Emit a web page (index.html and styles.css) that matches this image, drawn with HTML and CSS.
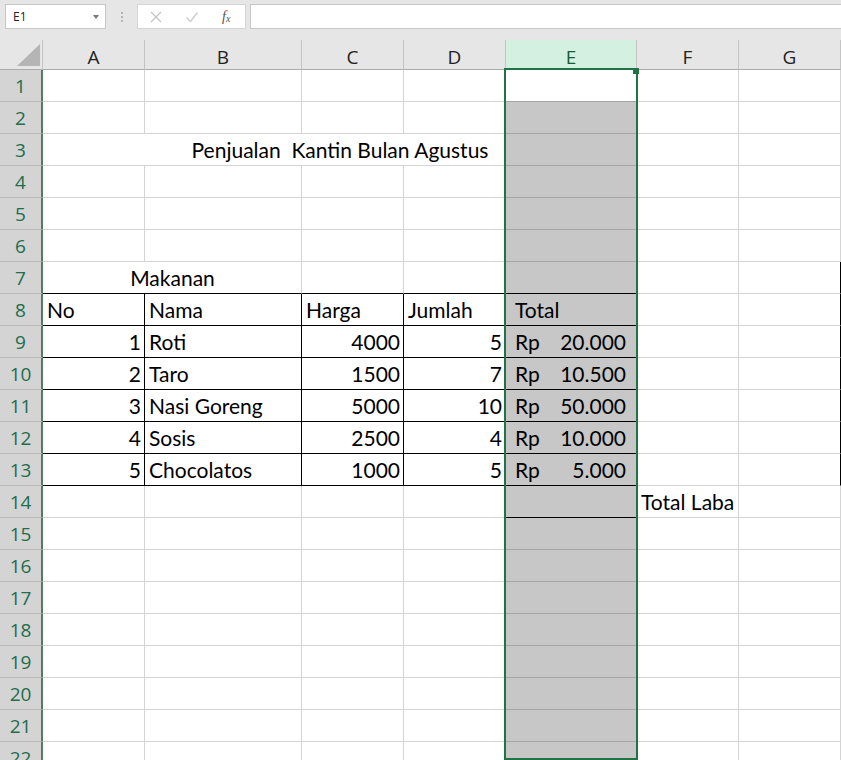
FILE: index.html
```html
<!DOCTYPE html>
<html lang="id">
<head>
  <meta charset="UTF-8">
  <title>Penjualan Kantin Bulan Agustus</title>
  <link rel="stylesheet" href="styles.css">
</head>
<body>
  <!-- Formula bar: name box, buttons, input -->
  <div class="formula-bar">
    <div class="name-box"><span>E1</span><span class="caret"></span></div>
    <div class="grip"><span></span><span></span><span></span></div>
    <div class="fx-buttons">
      <svg class="btn-icon" width="12" height="12" viewBox="0 0 12 12">
        <path d="M1 1 L11 11 M11 1 L1 11" stroke="#c4c4c4" stroke-width="1.3" fill="none"/>
      </svg>
      <svg class="btn-icon" width="12" height="12" viewBox="0 0 12 12">
        <path d="M0.5 6.5 L4.5 10.5 L11.5 1.5" stroke="#cdcdcd" stroke-width="1.4" fill="none"/>
      </svg>
      <span class="fx"><i>f</i><sub>x</sub></span>
    </div>
    <div class="formula-input"></div>
  </div>

  <!-- Worksheet -->
  <div class="sheet">
    <div class="corner"></div>
    <div class="col-head">A</div>
    <div class="col-head">B</div>
    <div class="col-head">C</div>
    <div class="col-head">D</div>
    <div class="col-head active">E</div>
    <div class="col-head">F</div>
    <div class="col-head">G</div>

    <!-- Row 1 -->
    <div class="row-head">1</div>
    <div class="cell"></div><div class="cell"></div><div class="cell"></div><div class="cell"></div>
    <div class="cell"></div><div class="cell"></div><div class="cell"></div>
    <!-- Row 2 -->
    <div class="row-head">2</div>
    <div class="cell"></div><div class="cell"></div><div class="cell"></div><div class="cell"></div>
    <div class="cell"></div><div class="cell"></div><div class="cell"></div>
    <!-- Row 3: title merged across A:E -->
    <div class="row-head">3</div>
    <div class="cell span5 center">Penjualan  Kantin Bulan Agustus</div>
    <div class="cell"></div><div class="cell"></div>
    <!-- Row 4 -->
    <div class="row-head">4</div>
    <div class="cell"></div><div class="cell"></div><div class="cell"></div><div class="cell"></div>
    <div class="cell"></div><div class="cell"></div><div class="cell"></div>
    <!-- Row 5 -->
    <div class="row-head">5</div>
    <div class="cell"></div><div class="cell"></div><div class="cell"></div><div class="cell"></div>
    <div class="cell"></div><div class="cell"></div><div class="cell"></div>
    <!-- Row 6 -->
    <div class="row-head">6</div>
    <div class="cell"></div><div class="cell"></div><div class="cell"></div><div class="cell"></div>
    <div class="cell"></div><div class="cell"></div><div class="cell"></div>
    <!-- Row 7: section label merged across A:B -->
    <div class="row-head">7</div>
    <div class="cell span2 center bb">Makanan</div>
    <div class="cell bb"></div><div class="cell bb"></div><div class="cell bb"></div>
    <div class="cell"></div><div class="cell br"></div>
    <!-- Row 8: table header -->
    <div class="row-head">8</div>
    <div class="cell bb br">No</div>
    <div class="cell bb br">Nama</div>
    <div class="cell bb br">Harga</div>
    <div class="cell bb br">Jumlah</div>
    <div class="cell acct bb">Total</div>
    <div class="cell"></div><div class="cell br"></div>
    <!-- Row 9 -->
    <div class="row-head">9</div>
    <div class="cell num bb br">1</div>
    <div class="cell bb br">Roti</div>
    <div class="cell num bb br">4000</div>
    <div class="cell num bb br">5</div>
    <div class="cell acct bb"><span>Rp</span><span>20.000</span></div>
    <div class="cell"></div><div class="cell br"></div>
    <!-- Row 10 -->
    <div class="row-head">10</div>
    <div class="cell num bb br">2</div>
    <div class="cell bb br">Taro</div>
    <div class="cell num bb br">1500</div>
    <div class="cell num bb br">7</div>
    <div class="cell acct bb"><span>Rp</span><span>10.500</span></div>
    <div class="cell"></div><div class="cell br"></div>
    <!-- Row 11 -->
    <div class="row-head">11</div>
    <div class="cell num bb br">3</div>
    <div class="cell bb br">Nasi Goreng</div>
    <div class="cell num bb br">5000</div>
    <div class="cell num bb br">10</div>
    <div class="cell acct bb"><span>Rp</span><span>50.000</span></div>
    <div class="cell"></div><div class="cell br"></div>
    <!-- Row 12 -->
    <div class="row-head">12</div>
    <div class="cell num bb br">4</div>
    <div class="cell bb br">Sosis</div>
    <div class="cell num bb br">2500</div>
    <div class="cell num bb br">4</div>
    <div class="cell acct bb"><span>Rp</span><span>10.000</span></div>
    <div class="cell"></div><div class="cell br"></div>
    <!-- Row 13 -->
    <div class="row-head">13</div>
    <div class="cell num bb br">5</div>
    <div class="cell bb br">Chocolatos</div>
    <div class="cell num bb br">1000</div>
    <div class="cell num bb br">5</div>
    <div class="cell acct bb"><span>Rp</span><span>5.000</span></div>
    <div class="cell"></div><div class="cell br"></div>
    <!-- Row 14 -->
    <div class="row-head">14</div>
    <div class="cell"></div><div class="cell"></div><div class="cell"></div><div class="cell"></div>
    <div class="cell bb"></div>
    <div class="cell">Total Laba</div>
    <div class="cell"></div>
    <!-- Rows 15-22 -->
    <div class="row-head">15</div>
    <div class="cell"></div><div class="cell"></div><div class="cell"></div><div class="cell"></div>
    <div class="cell"></div><div class="cell"></div><div class="cell"></div>
    <div class="row-head">16</div>
    <div class="cell"></div><div class="cell"></div><div class="cell"></div><div class="cell"></div>
    <div class="cell"></div><div class="cell"></div><div class="cell"></div>
    <div class="row-head">17</div>
    <div class="cell"></div><div class="cell"></div><div class="cell"></div><div class="cell"></div>
    <div class="cell"></div><div class="cell"></div><div class="cell"></div>
    <div class="row-head">18</div>
    <div class="cell"></div><div class="cell"></div><div class="cell"></div><div class="cell"></div>
    <div class="cell"></div><div class="cell"></div><div class="cell"></div>
    <div class="row-head">19</div>
    <div class="cell"></div><div class="cell"></div><div class="cell"></div><div class="cell"></div>
    <div class="cell"></div><div class="cell"></div><div class="cell"></div>
    <div class="row-head">20</div>
    <div class="cell"></div><div class="cell"></div><div class="cell"></div><div class="cell"></div>
    <div class="cell"></div><div class="cell"></div><div class="cell"></div>
    <div class="row-head">21</div>
    <div class="cell"></div><div class="cell"></div><div class="cell"></div><div class="cell"></div>
    <div class="cell"></div><div class="cell"></div><div class="cell"></div>
    <div class="row-head">22</div>
    <div class="cell"></div><div class="cell"></div><div class="cell"></div><div class="cell"></div>
    <div class="cell"></div><div class="cell"></div><div class="cell"></div>

    <!-- Column E selection outline and shading -->
    <div class="selection"><div class="shade"></div></div>
  </div>
</body>
</html>
```

FILE: styles.css
```css
* {
  box-sizing: border-box;
}
body {
  margin: 0;
  height: 760px;
  overflow: hidden;
  background: #fff;
  font-family: Lato, "Liberation Sans", sans-serif;
}

/* Formula bar */
.formula-bar {
  height: 40px;
  background: #e6e6e6;
  display: flex;
  align-items: flex-start;
  padding: 4px 0 0 5px;
}
.name-box {
  width: 101px;
  height: 25px;
  background: #fff;
  border: 1px solid #c6c6c6;
  display: flex;
  align-items: center;
  justify-content: space-between;
  padding: 0 6px 0 7px;
  font: 12px "Open Sans", sans-serif;
  color: #222;
}
.caret {
  border-left: 3.5px solid transparent;
  border-right: 3.5px solid transparent;
  border-top: 4px solid #777;
}
.grip {
  width: 31px;
  height: 25px;
  display: flex;
  flex-direction: column;
  align-items: center;
  justify-content: center;
  gap: 2px;
}
.grip span {
  width: 2px;
  height: 2px;
  background: #b5b5b5;
}
.fx-buttons {
  width: 109px;
  height: 25px;
  background: #fff;
  border: 1px solid #d4d4d4;
  display: flex;
  align-items: center;
  gap: 24px;
  padding-left: 12px;
}
.fx {
  width: 14px;
  font: italic 14px "Liberation Serif", serif;
  color: #555;
  line-height: 1;
}
.fx sub {
  font-size: 10px;
  vertical-align: -1px;
}
.formula-input {
  flex: 1;
  height: 25px;
  margin-left: 4px;
  background: #fff;
  border: 1px solid #c6c6c6;
  border-right: none;
}

/* Worksheet grid */
.sheet {
  position: relative;
  display: grid;
  grid-template-columns: 43px 102px 157px 102px 102px 131px 102px 102px;
  grid-template-rows: 30px;
  grid-auto-rows: 32px;
  height: 720px;
  overflow: hidden;
}
.corner,
.col-head {
  background: #e6e6e6;
  border-right: 1px solid #c4c4c4;
  border-bottom: 1px solid #ababab;
}
.corner {
  position: relative;
}
.corner::after {
  content: "";
  position: absolute;
  right: 2px;
  bottom: 3px;
  width: 23px;
  height: 22px;
  background: #b5b5b5;
  clip-path: polygon(100% 0, 100% 100%, 0 100%);
}
.col-head {
  display: flex;
  align-items: center;
  justify-content: center;
  padding-top: 4px;
  font: 19px "Open Sans", sans-serif;
  color: #222;
}
.col-head.active {
  background: #d3f0e0;
  color: #185c36;
}
.row-head {
  background: #d4d4d4;
  border-right: 2px solid #557a66;
  border-bottom: 1px solid #bababa;
  display: flex;
  align-items: center;
  justify-content: center;
  font: 19px "Open Sans", sans-serif;
  color: #226d4c;
}
.cell {
  border-right: 1px solid #d4d4d4;
  border-bottom: 1px solid #d4d4d4;
  display: flex;
  align-items: center;
  padding: 0 3px 0 4px;
  white-space: pre;
  font-size: 21px;
  color: #000;
}
.num {
  justify-content: flex-end;
}
.center {
  justify-content: center;
}
/* Accounting format: currency left, amount right */
.acct {
  justify-content: space-between;
  padding: 0 10px 0 9px;
}
.bb {
  border-bottom-color: #000;
}
.br {
  border-right-color: #000;
}
.span2 {
  grid-column: span 2;
}
.span5 {
  grid-column: span 5;
}

/* Selected column outline */
.selection {
  position: absolute;
  left: 504px;
  top: 28px;
  width: 134px;
  bottom: 0;
  border: 2px solid #217346;
  pointer-events: none;
}
.selection::after {
  content: "";
  position: absolute;
  right: -3px;
  top: -2px;
  width: 6px;
  height: 6px;
  background: #217346;
}
.shade {
  position: absolute;
  top: 31px;
  left: 0;
  right: 0;
  bottom: 0;
  background: rgba(0, 0, 0, 0.22);
}
```
